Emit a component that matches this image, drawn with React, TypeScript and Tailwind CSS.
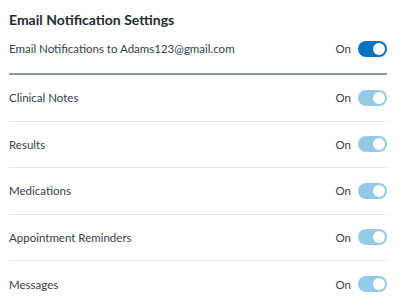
import React, { useState } from 'react';

const rows = ['Clinical Notes', 'Results', 'Medications', 'Appointment Reminders', 'Messages'];

const Toggle = ({ on, light, onClick }: { on: boolean; light?: boolean; onClick: () => void }) => (
  <button
    onClick={onClick}
    className={`relative flex h-[16px] w-[29px] items-center rounded-full px-[2px] ${
      on ? (light ? 'bg-[#95c9e8] justify-end' : 'bg-[#0b72bd] justify-end') : 'bg-[#c4c9ce] justify-start'
    }`}
  >
    <span className="block h-[12px] w-[12px] rounded-full bg-white" />
  </button>
);

export default function App() {
  const [master, setMaster] = useState(true);
  const [states, setStates] = useState<boolean[]>(rows.map(() => true));

  return (
    <div className="min-h-screen bg-white pl-[9px] pr-[13px] font-['Lato',sans-serif] text-[#34404c]">
      <h1 className="pt-[10px] text-[14px] font-bold leading-[20px] text-[#222a33]">Email Notification Settings</h1>

      <div className="flex h-[38px] items-center justify-between">
        <span className="text-[11.5px]">Email Notifications to Adams123@gmail.com</span>
        <div className="flex items-center gap-[7px]">
          <span className="text-[11.5px]">{master ? 'On' : 'Off'}</span>
          <Toggle on={master} onClick={() => setMaster(!master)} />
        </div>
      </div>
      <div className="mt-[5px] h-[2px] bg-[#8a96a1]" />

      {rows.map((label, i) => (
        <div
          key={label}
          className={`flex h-[46.5px] items-center justify-between ${i < rows.length - 1 ? 'border-b border-[#e3e6e9]' : ''}`}
        >
          <span className="text-[11.5px]">{label}</span>
          <div className="flex items-center gap-[7px]">
            <span className="text-[11.5px]">{states[i] ? 'On' : 'Off'}</span>
            <Toggle
              on={states[i]}
              light
              onClick={() => setStates(states.map((s, j) => (j === i ? !s : s)))}
            />
          </div>
        </div>
      ))}
    </div>
  );
}
